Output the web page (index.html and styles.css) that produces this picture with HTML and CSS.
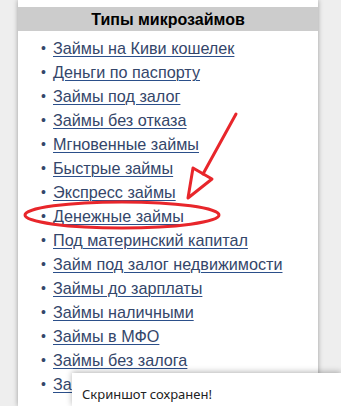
FILE: index.html
```html
<!DOCTYPE html>
<html lang="ru">
<head>
    <meta charset="UTF-8">
    <title>Типы микрозаймов</title>
    <link rel="stylesheet" href="styles.css">
</head>
<body>
    <div class="panel">
        <div class="panel-title">Типы микрозаймов</div>
        <ul class="types">
            <li><a href="#">Займы на Киви кошелек</a></li>
            <li><a href="#">Деньги по паспорту</a></li>
            <li><a href="#">Займы под залог</a></li>
            <li><a href="#">Займы без отказа</a></li>
            <li><a href="#">Мгновенные займы</a></li>
            <li><a href="#">Быстрые займы</a></li>
            <li><a href="#">Экспресс займы</a></li>
            <li><a href="#">Денежные займы</a></li>
            <li><a href="#">Под материнский капитал</a></li>
            <li><a href="#">Займ под залог недвижимости</a></li>
            <li><a href="#">Займы до зарплаты</a></li>
            <li><a href="#">Займы наличными</a></li>
            <li><a href="#">Займы в МФО</a></li>
            <li><a href="#">Займы без залога</a></li>
            <li><a href="#">Займы онлайн</a></li>
        </ul>
    </div>

    <!-- red markup drawn over the screenshot -->
    <svg class="markup" width="341" height="406" viewBox="0 0 341 406">
        <g fill="none" stroke="#e8262b" stroke-width="3" stroke-linejoin="round" stroke-linecap="round">
            <line x1="236" y1="114" x2="203" y2="174"/>
            <polygon points="193,168 212,179 188,198"/>
            <ellipse cx="122" cy="215" rx="97" ry="13"/>
        </g>
    </svg>

    <div class="toast">Скриншот сохранен!</div>
</body>
</html>
```
FILE: styles.css
```css
html {
    overflow: hidden;
}
body {
    margin: 0;
    background-color: #eeeeee;
    font-family: "Liberation Sans", Arial, sans-serif;
    height: 406px;
    overflow: hidden;
}
.panel {
    width: 300px;
    height: 406px;
    margin-left: 18px;
    padding-top: 7px;
    box-sizing: border-box;
    background-color: #fff;
    box-shadow: 0 0 5px rgba(0, 0, 0, 0.35);
}
.panel-title {
    background-color: #cccccc;
    color: #000;
    font-weight: bold;
    font-size: 16px;
    height: 24px;
    line-height: 25px;
    text-align: center;
}
.types {
    list-style: none;
    margin: 0;
    padding: 5px 0 0 23px;
}
.types li {
    display: flex;
    height: 24px;
    line-height: 24px;
    font-size: 16.2px;
}
.types li::before {
    content: "•";
    width: 12px;
    color: #34466a;
    font-size: 14px;
}
.types a {
    color: #34466a;
    text-decoration: underline;
    text-decoration-color: #2b4f8a;
    text-underline-offset: 2px;
    text-decoration-thickness: 1px;
}
.markup {
    position: absolute;
    left: 0;
    top: 0;
}
.toast {
    position: absolute;
    left: 72px;
    right: 0;
    top: 373px;
    bottom: 0;
    background-color: #fff;
    box-shadow: 0 -1px 6px rgba(0, 0, 0, 0.3);
    font-family: "Noto Sans", sans-serif;
    font-size: 13px;
    color: #222;
    padding: 12px 0 0 10px;
}
```
